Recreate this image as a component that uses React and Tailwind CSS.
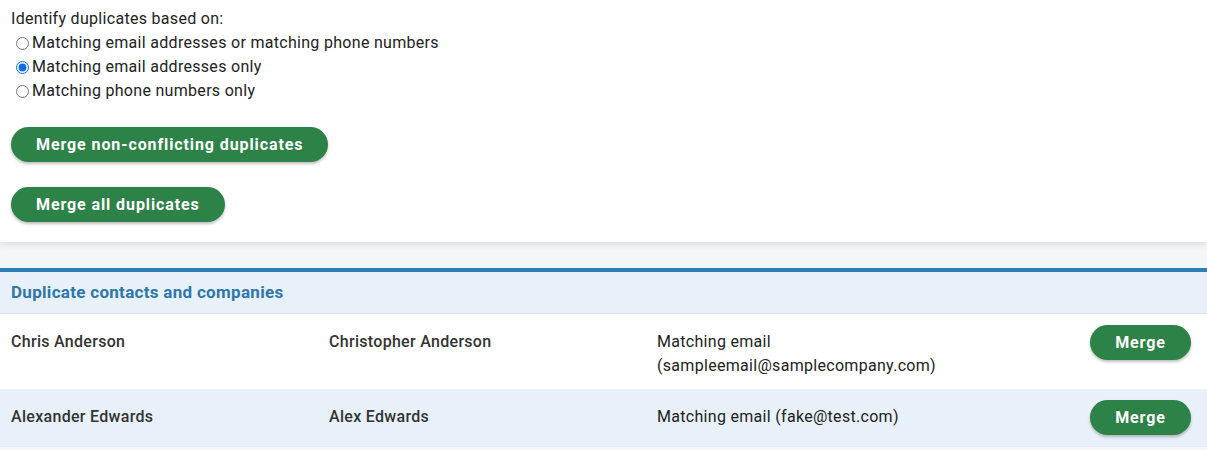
export default function App() {
  const font = { fontFamily: "Roboto, 'Liberation Sans', sans-serif" };
  const opts = [
    "Matching email addresses or matching phone numbers",
    "Matching email addresses only",
    "Matching phone numbers only",
  ];
  const rows = [
    { a: "Chris Anderson", b: "Christopher Anderson", c: ["Matching email", "(sampleemail@samplecompany.com)"], bg: "bg-white" },
    { a: "Alexander Edwards", b: "Alex Edwards", c: ["Matching email (fake@test.com)"], bg: "bg-[#e8f1f9]" },
  ];
  const btn =
    "rounded-full bg-[#2d8247] text-white font-bold text-[16px] tracking-[0.9px] h-[35px] shadow-[0_2px_3px_rgba(0,0,0,0.25)]";
  return (
    <div className="w-[1207px] h-[450px] bg-[#f4f6f7] overflow-hidden tracking-[0.3px]" style={font}>
      <div className="bg-white pt-[7px] pb-[20px] pl-[11px] shadow-[0_2px_8px_rgba(0,0,0,0.12)] relative">
        <div className="text-[16px] leading-[24px] text-[#222]">Identify duplicates based on:</div>
        {opts.map((o, i) => (
          <label key={i} className="flex items-center text-[16px] leading-[24px] text-[#222]">
            <input
              type="radio"
              name="dup"
              defaultChecked={i === 1}
              className="w-[13px] h-[13px] ml-[5px] mr-[3px] mt-[1px] accent-[#0b6fe0]"
            />
            {o}
          </label>
        ))}
        <div className="mt-[24px] flex flex-col items-start gap-[25px]">
          <button className={`${btn} px-[25px]`}>Merge non-conflicting duplicates</button>
          <button className={`${btn} px-[25px]`}>Merge all duplicates</button>
        </div>
      </div>
      <div className="mt-[26px] border-t-[4px] border-[#2f7db5] border-b border-b-[#e3eaf0]">
        <div className="h-[42px] bg-[#e8f1f9] border-b border-[#dde6ee] flex items-center pl-[11px] pt-[1px] text-[17px] font-bold text-[#2e77ad]">
          Duplicate contacts and companies
        </div>
        {rows.map((r, i) => (
          <div key={i} className={`${r.bg} flex items-start pl-[11px] pr-[16px] py-[11px] text-[16px] leading-[24px] text-[#333]`}>
            <div className="w-[318px] pt-[5px] font-medium">{r.a}</div>
            <div className="w-[328px] pt-[5px] font-medium">{r.b}</div>
            <div className="flex-1 pt-[5px] text-[#222]">
              {r.c.map((l, j) => (
                <div key={j}>{l}</div>
              ))}
            </div>
            <button className={`${btn} w-[101px]`}>Merge</button>
          </div>
        ))}
      </div>
    </div>
  );
}
